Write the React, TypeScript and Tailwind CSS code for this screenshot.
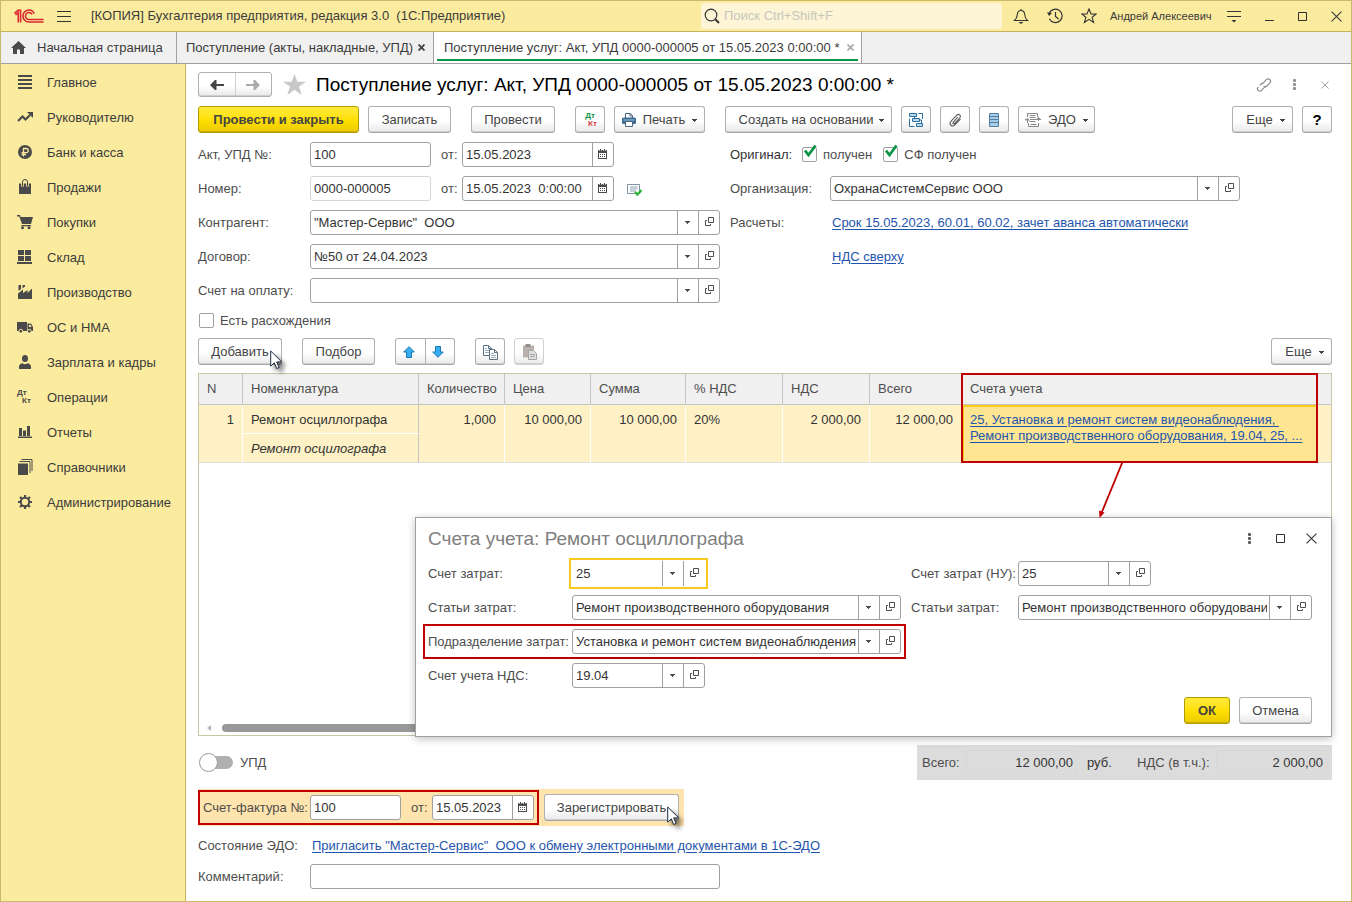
import type { ReactNode } from 'react';
import clsx from 'clsx';

type FieldKind = 'plain' | 'date' | 'lookup';

type FieldProps = {
  id: string;
  label: string;
  value?: string;
  kind?: FieldKind;
  className?: string;
  muted?: boolean;
  focused?: boolean;
};

type ButtonProps = {
  children: ReactNode;
  className?: string;
  label?: string;
  primary?: boolean;
  disabled?: boolean;
};

/* ---------- icons ---------- */

function Caret() {
  return (
    <svg width="5" height="3" viewBox="0 0 5 3" fill="currentColor" aria-hidden="true">
      <path d="M0 0h5v1H4v1H3v1H2V2H1V1H0z" />
    </svg>
  );
}

function OpenIcon() {
  return (
    <svg width="9" height="9" viewBox="0 0 9 9" fill="none" stroke="#4d4d4d" aria-hidden="true">
      <path d="M3.5.5h5v5h-5zM2 3.500H.5v5h5V7" />
    </svg>
  );
}

function CalendarIcon() {
  return (
    <svg width="9" height="10" viewBox="0 0 9 10" aria-hidden="true">
      <path d="M0 1h9v8.500a.5.5 0 0 1-.5.5h-8a.5.5 0 0 1-.5-.5z" fill="#4d4d4d" />
      <path d="M1 4h7v5H1z" fill="#fff" />
      <path d="M2 0h1v2H2zM6 0h1v2H6z" fill="#4d4d4d" />
      <path d="M1 1h1v1H1zM3 1h1v1H3zM5 1h1v1H5zM7 1h1v1H7z" fill="#b5b5b5" />
      <path d="M2 5.500h1m1 0h1m1 0h1M2 7.500h1m1 0h1m1 0h1" stroke="#4d4d4d" />
    </svg>
  );
}

function LogoIcon() {
  return (
    <svg width="30" height="14" viewBox="0 0 30 14" fill="none" stroke="#d9282f" aria-hidden="true">
      <path d="M.5 4.500 4 1.200h2.600V13.500M1.500 6 4.300 3.600V13.500" strokeWidth="1.600" />
      <path d="M20.200 4.800C19.300 2.500 17.200 1 14.900 1a6 6 0 0 0 0 12H29.500" strokeWidth="1.600" />
      <path d="M18 5.500C17.400 4.200 16.300 3.500 15 3.500a3.500 3.500 0 0 0 0 7H29.500" strokeWidth="1.600" />
    </svg>
  );
}

function CursorIcon({ className }: { className: string }) {
  return (
    <svg
      className={clsx('pointer-events-none absolute z-10 drop-shadow-[4px_4px_2px_rgba(0,0,0,0.5)]', className)}
      width="13"
      height="20"
      viewBox="0 0 13 20"
      aria-hidden="true"
    >
      <path d="M.7 1v15.200l3.600-3.400 2.400 5.700 2.400-1-2.400-5.600h5z" fill="#fff" stroke="#1f2a44" strokeLinejoin="round" />
    </svg>
  );
}

function KebabIcon() {
  return (
    <svg width="3" height="11" viewBox="0 0 3 11" fill="currentColor" aria-hidden="true">
      <rect width="3" height="3" rx="1" />
      <rect y="4" width="3" height="3" rx="1" />
      <rect y="8" width="3" height="3" rx="1" />
    </svg>
  );
}

function CloseIcon({ size }: { size: number }) {
  return (
    <svg width={size} height={size} viewBox="0 0 10 10" fill="none" stroke="currentColor" aria-hidden="true">
      <path d="M.5.5l9 9M9.500.5l-9 9" />
    </svg>
  );
}

function MaximizeIcon() {
  return (
    <svg width="9" height="9" viewBox="0 0 9 9" fill="none" stroke="#2f2f2f" aria-hidden="true">
      <path d="M.5.5h8v8h-8z" />
    </svg>
  );
}

function ArrowIcon({ flip, color }: { flip?: boolean; color: string }) {
  return (
    <svg
      className={flip ? 'rotate-180' : undefined}
      width="14"
      height="10"
      viewBox="0 0 14 10"
      fill={color}
      aria-hidden="true"
    >
      <path d="M0 5 5 0h1.500v4H14v2H6.500v4H5z" />
    </svg>
  );
}

function BlueArrow({ down }: { down?: boolean }) {
  return (
    <svg className={down ? 'rotate-180' : undefined} width="12" height="12" viewBox="0 0 12 12" aria-hidden="true">
      <path d="M6 .7 11.300 6H8.500v5.500h-5V6H.7z" fill="#38aef0" stroke="#1878b4" />
    </svg>
  );
}

function PrinterIcon() {
  return (
    <svg width="14" height="14" viewBox="0 0 14 14" aria-hidden="true">
      <path d="M3.500 5V.5h5l2 2V5" fill="#fff" stroke="#4c6680" />
      <path d="M8 .5V3h2.500" fill="none" stroke="#4c6680" />
      <rect y="4.500" width="14" height="6.500" rx="1.500" fill="#3d6c94" />
      <path d="M1.500 7h11" stroke="#9cc0dc" />
      <path d="M3.500 8.500h7v5h-7z" fill="#fff" stroke="#4c6680" />
    </svg>
  );
}

function StructureIcon() {
  return (
    <svg width="15" height="14" viewBox="0 0 15 14" fill="none" stroke="#2f6f9f" aria-hidden="true">
      <path d="M.5.500h7v3h-7zM3.500 5.500h7v3h-7zM7.500 10.500h6v3h-6z" fill="#b9d7ec" />
      <path d="M5.500 3.500v2M10.500 7h2v3.500M9.500.5h4V6M.5 5.500v8h5" />
    </svg>
  );
}

function ClipIcon() {
  return (
    <svg width="14" height="14" viewBox="0 0 14 14" fill="none" stroke="#5b5b5b" strokeWidth="1.100" aria-hidden="true">
      <path d="M9.800 4 5.200 9.300c-.9 1 .4 2.100 1.300 1.200L11.600 5c2-2.300-.8-5-3-2.700L3.100 8.200c-2.800 3.200 1 6.400 3.700 3.600L12.500 6" />
    </svg>
  );
}

function ListIcon() {
  return (
    <svg width="10" height="14" viewBox="0 0 10 14" aria-hidden="true">
      <path d="M.5.5h9v13h-9z" fill="#a5cdea" stroke="#54809f" />
      <path d="M0 3.500h10M0 6.500h10M0 9.500h10" stroke="#54809f" />
    </svg>
  );
}

function EdoIcon() {
  return (
    <svg width="16" height="14" viewBox="0 0 16 14" fill="none" stroke="#8a8a8a" aria-hidden="true">
      <path d="M2.500 4V.5h10V4M3.500 10v3.500h10V10M4.500 2.500h6M4.500 4.500h6M4.500 8.500h6M5.500 11.500h6" />
      <path d="M5 6.500h11M0 6.500h3M2.500 6v4M13.500 8V4" />
      <path d="M0 7.500h5L2.500 5zM11 6.500h5L13.500 4z" fill="#8a8a8a" stroke="none" />
    </svg>
  );
}

function DtKtIcon({ colored }: { colored?: boolean }) {
  return (
    <span className="flex flex-col text-[8px] leading-[8px] font-bold" aria-hidden="true">
      <span className={colored ? 'text-[#0b9444]' : undefined}>Дт</span>
      <span className={clsx('pl-[5px]', colored && 'text-[#d94141]')}>Кт</span>
    </span>
  );
}

function CopyIcon({ paste }: { paste?: boolean }) {
  if (paste) {
    return (
      <svg width="15" height="16" viewBox="0 0 15 16" aria-hidden="true">
        <path d="M1 1.500h11v12H1z" fill="#b8b1ad" />
        <path d="M3.500 0h5v3h-5z" fill="#8f8f8f" />
        <path d="M6.500 6.500h5l3 3v6h-8z" fill="#e0e0e0" stroke="#a5a5a5" />
        <path d="M8 10.500h5M8 12.500h5" stroke="#a5a5a5" />
      </svg>
    );
  }
  return (
    <svg width="15" height="15" viewBox="0 0 15 15" fill="#fff" stroke="#5a7284" aria-hidden="true">
      <path d="M.5.5h5l3 3v7h-8zM5.500.5v3h3" />
      <path d="M2 3.500h2M2 5.500h4M2 7.500h4" stroke="#9fb0bd" />
      <path d="M6.500 4.500h5l3 3v7h-8zM11.500 4.500v3h3" />
      <path d="M8 8.500h3M8 10.500h5M8 12.500h5" stroke="#9fb0bd" />
    </svg>
  );
}

/* ---------- sidebar glyphs, 16x16 ---------- */

const MENU: { title: string; icon: ReactNode }[] = [
  { title: 'Главное', icon: <path d="M1 1h14v2H1zM1 5h14v2H1zM1 9h14v2H1zM1 13h14v2H1z" /> },
  {
    title: 'Руководителю',
    icon: (
      <>
        <path d="M1 12 5.500 7.500 8.500 10.500 13 6" fill="none" stroke="currentColor" strokeWidth="2.200" />
        <path d="M10 3h6v6z" />
      </>
    ),
  },
  {
    title: 'Банк и касса',
    icon: (
      <>
        <circle cx="8" cy="8" r="7" />
        <path
          d="M6.500 12.500V4.500h2.700a2 2 0 0 1 0 4.200H4.500M4.500 10.500h4.500"
          fill="none"
          stroke="#fbeb9e"
          strokeWidth="1.300"
        />
      </>
    ),
  },
  {
    title: 'Продажи',
    icon: (
      <>
        <path d="M2 4.500h12V15H2z" />
        <path d="M5.500 7.500V3.500a2.500 2.500 0 0 1 5 0v4" fill="none" stroke="#fbeb9e" strokeWidth="2.600" />
        <path d="M5.500 7V3a2.500 2.500 0 0 1 5 0V7" fill="none" stroke="currentColor" />
      </>
    ),
  },
  {
    title: 'Покупки',
    icon: (
      <>
        <path d="M0 1h3l.6 2H16l-2 7H5L2.300 2.500H0zM4.500 11h9.500v1.200H4.500z" />
        <circle cx="5.500" cy="13.800" r="1.500" />
        <circle cx="12" cy="13.800" r="1.500" />
      </>
    ),
  },
  { title: 'Склад', icon: <path d="M1 1h6v5H1zM8 1h6v5H8zM1 7h6v5H1zM8 7h6v5H8zM0 13h15v2H0z" /> },
  {
    title: 'Производство',
    icon: <path d="M1 15V9.500l5-4V9l4.500-3v3L15 4.500V15zM1.500 1H4v4L1.500 7zM5.500 1H8v1.500l-2.500 2z" />,
  },
  {
    title: 'ОС и НМА',
    icon: (
      <>
        <path d="M0 3h10v9H0zM10.500 4.500H14l2 3.500v4h-5.500z" />
        <path d="M12 5.800h1.500L14.500 8H12z" fill="#fbeb9e" />
        <circle cx="3.800" cy="12.200" r="1.900" stroke="#fbeb9e" />
        <circle cx="12.300" cy="12.200" r="1.900" stroke="#fbeb9e" />
      </>
    ),
  },
  {
    title: 'Зарплата и кадры',
    icon: (
      <>
        <ellipse cx="8" cy="4.500" rx="3" ry="3.600" />
        <path d="M2 15v-2.500C2 10.500 4 9.500 5.500 9.300a4 4 0 0 0 5 0c1.500.2 3.500 1.200 3.500 3.200V15z" />
      </>
    ),
  },
  { title: 'Операции', icon: null },
  { title: 'Отчеты', icon: <path d="M2 4h3v8H2zM6 6.500h3V12H6zM10 2h3v10h-3zM1 12.500h14V14H1z" /> },
  {
    title: 'Справочники',
    icon: (
      <>
        <path d="M1 4.500h10V16H1z" />
        <path d="M2.500 2.500h10.500V14M4.500.5H15V12" fill="none" stroke="currentColor" />
      </>
    ),
  },
  {
    title: 'Администрирование',
    icon: (
      <>
        <circle cx="8" cy="8" r="4.200" fill="none" stroke="currentColor" strokeWidth="2" />
        <path
          d="M8 1v2.500M8 12.500V15M1 8h2.500M12.500 8H15M3 3l1.800 1.800M11.200 11.200 13 13M13 3l-1.800 1.800M4.800 11.200 3 13"
          stroke="currentColor"
          strokeWidth="2.200"
        />
      </>
    ),
  },
];

/* ---------- controls ---------- */

function Button({ children, className, label, primary, disabled }: ButtonProps) {
  return (
    <button
      type="button"
      aria-label={label}
      disabled={disabled}
      className={clsx(
        'flex h-[27px] shrink-0 items-center justify-center rounded-[3px] border pt-px whitespace-nowrap',
        primary
          ? 'border-[#b09c00] bg-linear-to-b from-[#ffea38] via-[#ffe000] to-[#ecca00] font-bold text-[#444] shadow-[inset_0_-1px_0_#c9b000]'
          : 'bg-linear-to-b from-white from-55% to-[#e9e9e9] text-[#444] shadow-[inset_0_-1px_0_#cfcfcf]',
        !primary && (disabled ? 'border-[#d0d0d0]' : 'border-[#b0b0b0] border-b-[#a6a6a6]'),
        className,
      )}
    >
      {children}
    </button>
  );
}

function Field({ id, label, value = '', kind = 'plain', className, muted, focused }: FieldProps) {
  return (
    <div
      className={clsx(
        'flex h-[25px] min-w-0 shrink-0 overflow-hidden bg-white',
        focused ? 'pr-px outline-2 outline-offset-1 outline-[#f8ca1e]' : 'rounded-[3px] border',
        !focused && (muted ? 'border-[#d6d6d6]' : 'border-[#a0a0a0]'),
        className,
      )}
    >
      <input
        id={id}
        aria-label={label}
        defaultValue={value}
        className={clsx('mr-0.5 w-0 min-w-0 flex-1 bg-transparent text-[#333] outline-none', focused ? 'pl-1' : 'pl-[3px]')}
      />
      {kind === 'date' && (
        <button
          type="button"
          aria-label={`${label}: календарь`}
          className="flex w-[21px] items-center justify-center border-l border-[#a0a0a0] pr-px pb-0.5"
        >
          <CalendarIcon />
        </button>
      )}
      {kind === 'lookup' && (
        <>
          <button
            type="button"
            aria-label={`${label}: список`}
            className="flex w-[21px] items-center justify-center border-l border-[#a0a0a0] pr-px pb-px text-[#4d4d4d]"
          >
            <Caret />
          </button>
          <button
            type="button"
            aria-label={`${label}: открыть`}
            className="flex w-[21px] items-center justify-center border-l border-[#a0a0a0] pb-0.5"
          >
            <OpenIcon />
          </button>
        </>
      )}
    </div>
  );
}

function Checkbox({ label, checked }: { label: string; checked?: boolean }) {
  return (
    <label className="flex items-center gap-1.5">
      <span className="relative flex">
        <input
          type="checkbox"
          defaultChecked={checked}
          className="peer size-[15px] appearance-none rounded-[2px] border border-[#a0a0a0] bg-white"
        />
        <svg
          className="pointer-events-none absolute -top-1 left-0.5 hidden peer-checked:block"
          width="14"
          height="16"
          viewBox="0 0 14 16"
          fill="none"
          stroke="#0b9444"
          strokeWidth="2.800"
          aria-hidden="true"
        >
          <path d="M1 7.500 4.500 12 11.500 2.500" />
        </svg>
      </span>
      {label}
    </label>
  );
}

function IconButton({ label, className, children }: { label: string; className?: string; children: ReactNode }) {
  return (
    <button type="button" aria-label={label} className={clsx('flex shrink-0 items-center justify-center', className)}>
      {children}
    </button>
  );
}

function TextLink({ children }: { children: ReactNode }) {
  return (
    <a href="#" className="whitespace-pre text-[#1f55ad] underline underline-offset-2">
      {children}
    </a>
  );
}

/* ---------- page parts ---------- */

function TitleBar() {
  return (
    <header className="flex h-[31px] shrink-0 items-center border-b border-[#c8b35c] bg-[#fbeb9e] text-[#3b3b3b]">
      <span className="ml-[13px]">
        <LogoIcon />
      </span>
      <IconButton label="Меню" className="ml-[13px]">
        <svg width="14" height="11" viewBox="0 0 14 11" stroke="#333" aria-hidden="true">
          <path d="M0 .5h14M0 5.500h14M0 10.500h14" />
        </svg>
      </IconButton>
      <h1 className="ml-5 truncate whitespace-pre">[КОПИЯ] Бухгалтерия предприятия, редакция 3.0  (1С:Предприятие)</h1>
      <div className="ml-auto flex h-[26px] w-[301px] shrink-0 items-center rounded-[3px] bg-[#fdf5d6] pl-[3px]">
        <svg width="16" height="16" viewBox="0 0 16 16" fill="none" stroke="#333" aria-hidden="true">
          <circle cx="7" cy="7" r="5.800" strokeWidth="1.200" />
          <path d="M11.300 11.300 15 15" strokeWidth="2" />
        </svg>
        <input
          aria-label="Поиск"
          placeholder="Поиск Ctrl+Shift+F"
          className="ml-1 min-w-0 flex-1 bg-transparent outline-none placeholder:text-[#c8c6bc]"
        />
      </div>
      <IconButton label="Уведомления" className="ml-0.5 w-[34px]">
        <svg width="16" height="16" viewBox="0 0 16 16" fill="none" stroke="#333" strokeWidth="1.100" aria-hidden="true">
          <path d="M1.500 12.500h13c-2-1.600-2.500-3-2.800-6C11.500 4 10 2.500 8 2.500S4.500 4 4.300 6.500c-.3 3-.8 4.400-2.800 6zM8 1v1.500" />
          <path d="M5.500 14h5L8 16z" fill="#333" stroke="none" />
        </svg>
      </IconButton>
      <IconButton label="История" className="w-[34px]">
        <svg width="16" height="16" viewBox="0 0 16 16" fill="none" stroke="#333" strokeWidth="1.200" aria-hidden="true">
          <path d="M2 6a6.700 6.700 0 1 1 .4 4.700M8.500 4v4.500l3 2.500" />
          <path d="M0 4.200 5 5 2 8z" fill="#333" stroke="none" />
        </svg>
      </IconButton>
      <IconButton label="Избранное" className="w-[34px]">
        <svg width="16" height="16" viewBox="0 0 16 16" fill="none" stroke="#333" strokeWidth="1.100" aria-hidden="true">
          <path d="M8 1l2 5h5.200l-4.100 3.300 1.500 5.200L8 11.400l-4.600 3.100 1.500-5.200L.8 6H6z" />
        </svg>
      </IconButton>
      <span className="ml-1 w-[107px] text-[11px] whitespace-nowrap">Андрей Алексеевич</span>
      <IconButton label="Сервис" className="w-[34px]">
        <svg width="14" height="13" viewBox="0 0 14 13" stroke="#333" fill="#333" aria-hidden="true">
          <path d="M0 1.500h14M0 6.500h14" />
          <path d="M4.500 10h5L7 12.500z" stroke="none" />
        </svg>
      </IconButton>
      <IconButton label="Свернуть" className="w-9 pt-2">
        <span className="h-px w-[9px] bg-[#333]" />
      </IconButton>
      <IconButton label="Развернуть" className="w-[30px]">
        <MaximizeIcon />
      </IconButton>
      <IconButton label="Закрыть" className="w-[34px] pl-1">
        <CloseIcon size={11} />
      </IconButton>
    </header>
  );
}

function TabBar() {
  return (
    <nav className="flex h-8 shrink-0 border-b border-[#a0a0a0] bg-[#f0f0f0] whitespace-nowrap text-[#3b3b3b]">
      <a href="#" className="flex w-[176px] items-center gap-[11px] border-r border-[#a0a0a0] pl-2.5">
        <svg width="15" height="13" viewBox="0 0 15 13" fill="#4a4a4a" aria-hidden="true">
          <path d="M7.500 0 15 7h-2v6H9V8.500H6V13H2V7H0z" />
        </svg>
        Начальная страница
      </a>
      <div className="flex w-[257px] items-center justify-between border-r border-[#a0a0a0] pr-2 pl-[9px]">
        <a href="#">Поступление (акты, накладные, УПД)</a>
        <IconButton label="Закрыть вкладку">
          <svg width="7" height="7" viewBox="0 0 7 7" stroke="#444" strokeWidth="1.800" aria-hidden="true">
            <path d="M.5.5l6 6M6.500.5l-6 6" />
          </svg>
        </IconButton>
      </div>
      <div className="flex w-[428px] flex-col border-r border-[#a0a0a0] bg-white px-[3px]">
        <div className="flex h-[29px] items-center justify-between border-b-2 border-[#0b9444] pt-1 pr-1 pl-[7px]">
          <a href="#">Поступление услуг: Акт, УПД 0000-000005 от 15.05.2023 0:00:00 *</a>
          <IconButton label="Закрыть вкладку">
            <svg width="7" height="7" viewBox="0 0 7 7" stroke="#aaa" strokeWidth="1.600" aria-hidden="true">
              <path d="M.5.5l6 6M6.500.5l-6 6" />
            </svg>
          </IconButton>
        </div>
      </div>
    </nav>
  );
}

function Sidebar() {
  return (
    <aside className="w-[185px] shrink-0 border-r border-[#c8b35c] bg-[#fbeb9e] pt-px text-[#3b3b3b]">
      {MENU.map((item) => (
        <a key={item.title} href="#" className="flex h-[35px] items-center pl-4">
          <span className="flex w-[30px] shrink-0 pb-px text-[#4a4a4a]">
            {item.icon ? (
              <svg width="16" height="16" viewBox="0 0 16 16" fill="currentColor" aria-hidden="true">
                {item.icon}
              </svg>
            ) : (
              <DtKtIcon />
            )}
          </span>
          {item.title}
        </a>
      ))}
    </aside>
  );
}

function DocumentHeader() {
  return (
    <div className="flex h-[25px] items-center">
      <div className="flex h-[25px] w-[74px] shrink-0 rounded-[3px] border border-[#b0b0b0] bg-linear-to-b from-white from-55% to-[#e9e9e9] shadow-[inset_0_-1px_0_#cfcfcf]">
        <IconButton label="Назад" className="flex-1 border-r border-[#d0d0d0]">
          <ArrowIcon color="#444" />
        </IconButton>
        <IconButton label="Вперед" className="flex-1">
          <ArrowIcon flip color="#aaa" />
        </IconButton>
      </div>
      <IconButton label="В избранное" className="ml-[11px]">
        <svg width="23" height="21" viewBox="0 0 24 22" fill="#c8c8c8" aria-hidden="true">
          <path d="M12 0l3 8h9l-7.200 5L19.500 22 12 16.500 4.500 22l2.700-9L0 8h9z" />
        </svg>
      </IconButton>
      <h2 className="ml-2.5 truncate text-[19px] leading-6 text-black">
        Поступление услуг: Акт, УПД 0000-000005 от 15.05.2023 0:00:00 *
      </h2>
      <div className="ml-auto flex items-center text-[#8f8f8f]">
        <IconButton label="Ссылка" className="w-[30px]">
          <svg width="16" height="16" viewBox="0 0 16 16" fill="none" stroke="currentColor" strokeWidth="1.200" aria-hidden="true">
            <path d="M6.200 7.200 10.400 2.600c2.100-2.300 5.600.9 3.500 3.200l-3 3.200c-1 1-2.300 1.100-3.200.3" />
            <path d="M9.800 8.800 5.600 13.400c-2.100 2.300-5.600-.9-3.500-3.200l3-3.200c.5-.5 1-.8 1.600-.8" strokeDasharray="14 2 20" />
          </svg>
        </IconButton>
        <IconButton label="Еще" className="w-[30px]">
          <KebabIcon />
        </IconButton>
        <IconButton label="Закрыть" className="ml-[9px] w-3.5">
          <CloseIcon size={8} />
        </IconButton>
      </div>
    </div>
  );
}

function Toolbar() {
  return (
    <div className="mt-[9px] flex gap-[9px]">
      <Button primary className="w-[161px]">
        Провести и закрыть
      </Button>
      <Button className="w-[83px]">Записать</Button>
      <Button className="ml-[11px] w-[84px]">Провести</Button>
      <Button label="Дт Кт" className="ml-[11px] w-[30px]">
        <DtKtIcon colored />
      </Button>
      <Button className="w-[91px] gap-[7px]">
        <PrinterIcon />
        Печать
        <Caret />
      </Button>
      <Button className="ml-[11px] w-[167px] gap-1.5 pl-1.5">
        Создать на основании
        <Caret />
      </Button>
      <Button label="Структура подчиненности" className="w-[30px]">
        <StructureIcon />
      </Button>
      <Button label="Присоединенные файлы" className="w-[30px]">
        <ClipIcon />
      </Button>
      <Button label="Список" className="w-[30px]">
        <ListIcon />
      </Button>
      <Button className="w-[77px] gap-[7px]">
        <EdoIcon />
        ЭДО
        <Caret />
      </Button>
      <Button className="ml-auto w-[61px] gap-[7px] pl-1.5">
        Еще
        <Caret />
      </Button>
      <Button label="Справка" className="w-[30px] text-[15px] font-bold text-black">
        ?
      </Button>
    </div>
  );
}

function DocumentForm() {
  return (
    <div className="mt-[9px] flex gap-2.5">
      <div className="grid w-[522px] shrink-0 grid-cols-[112px_410px] items-center gap-y-[9px]">
        <label htmlFor="act">Акт, УПД №:</label>
        <div className="flex items-center">
          <Field id="act" label="Акт, УПД №" value="100" className="w-[121px]" />
          <label htmlFor="act-date" className="w-[31px] pl-2.5">
            от:
          </label>
          <Field id="act-date" label="Дата акта" value="15.05.2023" kind="date" className="w-[152px]" />
        </div>

        <label htmlFor="number">Номер:</label>
        <div className="flex items-center">
          <Field id="number" label="Номер" value="0000-000005" muted className="w-[121px]" />
          <label htmlFor="number-date" className="w-[31px] pl-2.5">
            от:
          </label>
          <Field id="number-date" label="Дата документа" value="15.05.2023  0:00:00" kind="date" className="w-[152px]" />
          <svg className="mt-0.5 ml-[13px]" width="15" height="13" viewBox="0 0 15 13" fill="none" aria-hidden="true">
            <path d="M.5 1.500h12v9H.5z" fill="#fff" stroke="#7d93a6" />
            <path d="M3 4h7.500M3 6h7.500M3 8h6" stroke="#8ea3b4" />
            <path d="M8 9l2.500 2.500L14.500 7" stroke="#2fb33a" strokeWidth="2.400" />
          </svg>
        </div>

        <label htmlFor="partner">Контрагент:</label>
        <Field id="partner" label="Контрагент" value={'"Мастер-Сервис"  ООО'} kind="lookup" />

        <label htmlFor="contract">Договор:</label>
        <Field id="contract" label="Договор" value="№50 от 24.04.2023" kind="lookup" />

        <label htmlFor="invoice">Счет на оплату:</label>
        <Field id="invoice" label="Счет на оплату" kind="lookup" />
      </div>

      <div className="grid auto-rows-[25px] grid-cols-[72px_28px_410px] items-center gap-y-[9px]">
        <span className="text-[#333]">Оригинал:</span>
        <div className="col-span-2 flex gap-[11px]">
          <Checkbox label="получен" checked />
          <Checkbox label="СФ получен" checked />
        </div>

        <label htmlFor="org" className="col-span-2">
          Организация:
        </label>
        <Field id="org" label="Организация" value="ОхранаСистемСервис ООО" kind="lookup" />

        <span className="col-span-2">Расчеты:</span>
        <span className="pl-0.5">
          <TextLink>Срок 15.05.2023, 60.01, 60.02, зачет аванса автоматически</TextLink>
        </span>

        <span className="col-start-3 pl-0.5">
          <TextLink>НДС сверху</TextLink>
        </span>
      </div>
    </div>
  );
}

function ItemsToolbar() {
  return (
    <div className="mt-[9px] flex">
      <div className="relative">
        <Button className="w-[84px]">Добавить</Button>
        <CursorIcon className="top-3 left-[72px]" />
      </div>
      <Button className="ml-5 w-[73px]">Подбор</Button>
      <Button label="Вверх" className="ml-5 w-[31px] rounded-r-none pr-1">
        <BlueArrow />
      </Button>
      <Button label="Вниз" className="-ml-px w-[30px] rounded-l-none pr-1">
        <BlueArrow down />
      </Button>
      <Button label="Копировать" className="ml-5 w-[30px]">
        <CopyIcon />
      </Button>
      <Button label="Вставить" disabled className="ml-[9px] w-[30px]">
        <CopyIcon paste />
      </Button>
      <Button className="ml-auto w-[61px] gap-[7px] pl-1.5">
        Еще
        <Caret />
      </Button>
    </div>
  );
}

const HEADERS = ['N', 'Номенклатура', 'Количество', 'Цена', 'Сумма', '% НДС', 'НДС', 'Всего', 'Счета учета'];

const CELL = 'border-r border-b border-r-white border-b-[#dcdcdc] pt-[7px] align-top';

function ItemsTable() {
  return (
    <table className="w-full table-fixed border-separate border-spacing-0 whitespace-nowrap">
      <colgroup>
        <col className="w-[44px]" />
        <col className="w-[176px]" />
        <col className="w-[86px]" />
        <col className="w-[86px]" />
        <col className="w-[95px]" />
        <col className="w-[97px]" />
        <col className="w-[87px]" />
        <col className="w-[92px]" />
        <col />
        <col className="w-[13px]" />
      </colgroup>
      <thead>
        <tr className="h-[31px] bg-[#f0f0f0] text-left text-[#4d4d4d]">
          {HEADERS.map((title) => (
            <th key={title} className="border-r border-b border-[#c4c4c4] pl-2 font-normal">
              {title}
            </th>
          ))}
          <td className="border-b border-[#c4c4c4]" />
        </tr>
      </thead>
      <tbody className="text-[#333]">
        <tr className="h-[29px] bg-[#fdf1c5] text-right">
          <td rowSpan={2} className={clsx(CELL, 'pr-2')}>
            1
          </td>
          <td className="border-r border-b border-r-[#c4c4c4] border-b-white pt-0.5 pl-2 text-left">
            Ремонт осциллографа
          </td>
          <td rowSpan={2} className={clsx(CELL, 'pr-2')}>
            1,000
          </td>
          <td rowSpan={2} className={clsx(CELL, 'pr-2')}>
            10 000,00
          </td>
          <td rowSpan={2} className={clsx(CELL, 'pr-2')}>
            10 000,00
          </td>
          <td rowSpan={2} className={clsx(CELL, 'pl-2 text-left')}>
            20%
          </td>
          <td rowSpan={2} className={clsx(CELL, 'pr-2')}>
            2 000,00
          </td>
          <td rowSpan={2} className={clsx(CELL, 'pr-2')}>
            12 000,00
          </td>
          <td
            rowSpan={2}
            className="border-2 border-[#f8ca1e] bg-[#fde592] pt-[5px] pl-1.5 text-left align-top leading-4 text-[#1f55ad]"
          >
            <a href="#" className="block whitespace-pre underline underline-offset-2">
              {'25, Установка и ремонт систем видеонаблюдения, \nРемонт производственного оборудования, 19.04, 25, ...'}
            </a>
          </td>
          <td rowSpan={2} className="border-b border-[#dcdcdc]" />
        </tr>
        <tr className="h-[29px] bg-[#fdf1c5]">
          <td className="border-r border-b border-r-[#c4c4c4] border-b-[#dcdcdc] pt-0.5 pl-2 italic">
            Ремонт осцилографа
          </td>
        </tr>
      </tbody>
    </table>
  );
}

function AccountsDialog() {
  return (
    <section
      role="dialog"
      aria-label="Счета учета"
      className="absolute top-[143px] -right-px -bottom-0.5 left-[216px] flex flex-col border border-[#a0a0a0] bg-white pr-[19px] pl-3 shadow-[0_2px_8px_rgba(0,0,0,0.25)]"
    >
      <div className="flex h-[41px] items-center">
        <h3 className="text-[19px] leading-6 text-[#808080]">Счета учета: Ремонт осциллографа</h3>
        <div className="-mr-[15px] ml-auto flex items-center text-[#333]">
          <IconButton label="Еще" className="w-[31px] text-[#5a5a5a]">
            <KebabIcon />
          </IconButton>
          <IconButton label="Развернуть" className="w-[31px]">
            <MaximizeIcon />
          </IconButton>
          <IconButton label="Закрыть" className="w-[31px]">
            <CloseIcon size={11} />
          </IconButton>
        </div>
      </div>
      <div className="grid grid-cols-[144px_329px_10px_107px_minmax(0,294px)] items-center gap-y-[9px] pt-0.5">
        <label htmlFor="cost">Счет затрат:</label>
        <Field id="cost" label="Счет затрат" value="25" kind="lookup" focused className="w-[133px]" />
        <label htmlFor="cost-tax" className="col-start-4">
          Счет затрат (НУ):
        </label>
        <Field id="cost-tax" label="Счет затрат (НУ)" value="25" kind="lookup" className="w-[133px]" />

        <label htmlFor="article">Статьи затрат:</label>
        <Field id="article" label="Статьи затрат" value="Ремонт производственного оборудования" kind="lookup" />
        <label htmlFor="article-tax" className="col-start-4">
          Статьи затрат:
        </label>
        <Field id="article-tax" label="Статьи затрат (НУ)" value="Ремонт производственного оборудования" kind="lookup" />

        <div className="relative col-span-2 flex items-center">
          <label htmlFor="division" className="w-[144px] whitespace-nowrap">
            Подразделение затрат:
          </label>
          <Field
            id="division"
            label="Подразделение затрат"
            value="Установка и ремонт систем видеонаблюдения"
            kind="lookup"
            className="flex-1"
          />
          <div className="pointer-events-none absolute -inset-[5px] border-2 border-[#c00000]" />
        </div>

        <label htmlFor="vat" className="col-start-1">
          Счет учета НДС:
        </label>
        <Field id="vat" label="Счет учета НДС" value="19.04" kind="lookup" className="w-[133px]" />
      </div>
      <div className="mt-auto flex justify-end gap-[9px] pb-3">
        <Button primary className="w-[46px]">
          ОК
        </Button>
        <Button className="w-[73px]">Отмена</Button>
      </div>
    </section>
  );
}

function ItemsArea() {
  return (
    <div className="relative mt-2 flex min-h-[363px] flex-1 flex-col border border-[#cbc6a6]">
      <ItemsTable />
      <div className="mt-auto flex items-center gap-[11px] pb-[3px] pl-2">
        <svg width="4" height="6" viewBox="0 0 4 6" fill="#b5b5b5" aria-hidden="true">
          <path d="M4 0v6L0 3z" />
        </svg>
        <div className="h-2 w-[640px] rounded-full bg-[#999]" />
      </div>

      {/* Callout around the accounts column, with a pointer to the dialog */}
      <div className="pointer-events-none absolute -top-px right-[13px] left-[762px] h-[90px] border-2 border-[#c00000]" />
      <AccountsDialog />
      <svg
        className="pointer-events-none absolute top-[88px] left-[898px]"
        width="28"
        height="56"
        viewBox="0 0 28 56"
        aria-hidden="true"
      >
        <path d="M25.500 0 4.500 51" stroke="#c00000" strokeWidth="1.800" />
        <path d="M2.500 56 2 48.500l5.500 2z" fill="#c00000" />
      </svg>
    </div>
  );
}

function Totals() {
  return (
    <div className="mt-[9px] flex h-[35px] items-center justify-between">
      <label className="flex items-center gap-[7px]">
        <input
          type="checkbox"
          role="switch"
          className="relative ml-2 h-[13px] w-[27px] appearance-none rounded-full bg-[#b0b0b0] before:absolute before:-top-[3px] before:-left-[7px] before:size-[19px] before:rounded-full before:border before:border-[#999] before:bg-white"
        />
        УПД
      </label>
      <div className="flex h-[35px] items-center bg-[#dcdcdc] px-[5px]">
        <span className="w-11">Всего:</span>
        <output className="h-[25px] w-[111px] rounded-[3px] border border-[#d8d8d8] pr-[3px] text-right leading-6 text-[#333]">
          12 000,00
        </output>
        <span className="w-[50px] pl-2.5 text-[#333]">руб.</span>
        <span className="w-[89px] pl-2.5 whitespace-nowrap">НДС (в т.ч.):</span>
        <output className="h-[25px] w-[111px] rounded-[3px] border border-[#d8d8d8] pr-[3px] text-right leading-6 text-[#333]">
          2 000,00
        </output>
      </div>
    </div>
  );
}

function InvoiceRow() {
  return (
    <div className="mt-[9px] flex h-[37px] w-[486px] items-center bg-[#ffe4ad]">
      <div className="flex h-[35px] w-[341px] items-center border-2 border-[#c00000] pl-[3px]">
        <label htmlFor="sf" className="w-[107px] whitespace-nowrap">
          Счет-фактура №:
        </label>
        <Field id="sf" label="Счет-фактура №" value="100" className="w-[91px]" />
        <label htmlFor="sf-date" className="w-[31px] pl-2.5">
          от:
        </label>
        <Field id="sf-date" label="Дата счета-фактуры" value="15.05.2023" kind="date" className="w-[102px]" />
      </div>
      <div className="relative ml-[5px]">
        <Button className="w-[135px]">Зарегистрировать</Button>
        <CursorIcon className="top-3 left-[123px]" />
      </div>
    </div>
  );
}

export default function App() {
  return (
    <div className="flex min-h-screen flex-col border border-[#c8b96c] bg-white font-['Liberation_Sans',Arial,sans-serif] text-[13px] leading-4 text-[#4d4d4d]">
      <TitleBar />
      <TabBar />
      <div className="flex flex-1">
        <Sidebar />
        <main className="flex min-w-0 flex-1 flex-col pt-2 pr-[19px] pb-3 pl-3">
          <DocumentHeader />
          <Toolbar />
          <DocumentForm />
          <div className="mt-2 flex h-[18px] items-center pt-px pl-px">
            <Checkbox label="Есть расхождения" />
          </div>
          <ItemsToolbar />
          <ItemsArea />
          <Totals />
          <InvoiceRow />
          <div className="mt-[9px] flex h-5 items-center pt-px">
            <span className="w-[114px]">Состояние ЭДО:</span>
            <TextLink>{'Пригласить "Мастер-Сервис"  ООО к обмену электронными документами в 1С-ЭДО'}</TextLink>
          </div>
          <div className="mt-[9px] flex items-center">
            <label htmlFor="comment" className="w-[112px]">
              Комментарий:
            </label>
            <Field id="comment" label="Комментарий" className="w-[410px]" />
          </div>
        </main>
      </div>
    </div>
  );
}
